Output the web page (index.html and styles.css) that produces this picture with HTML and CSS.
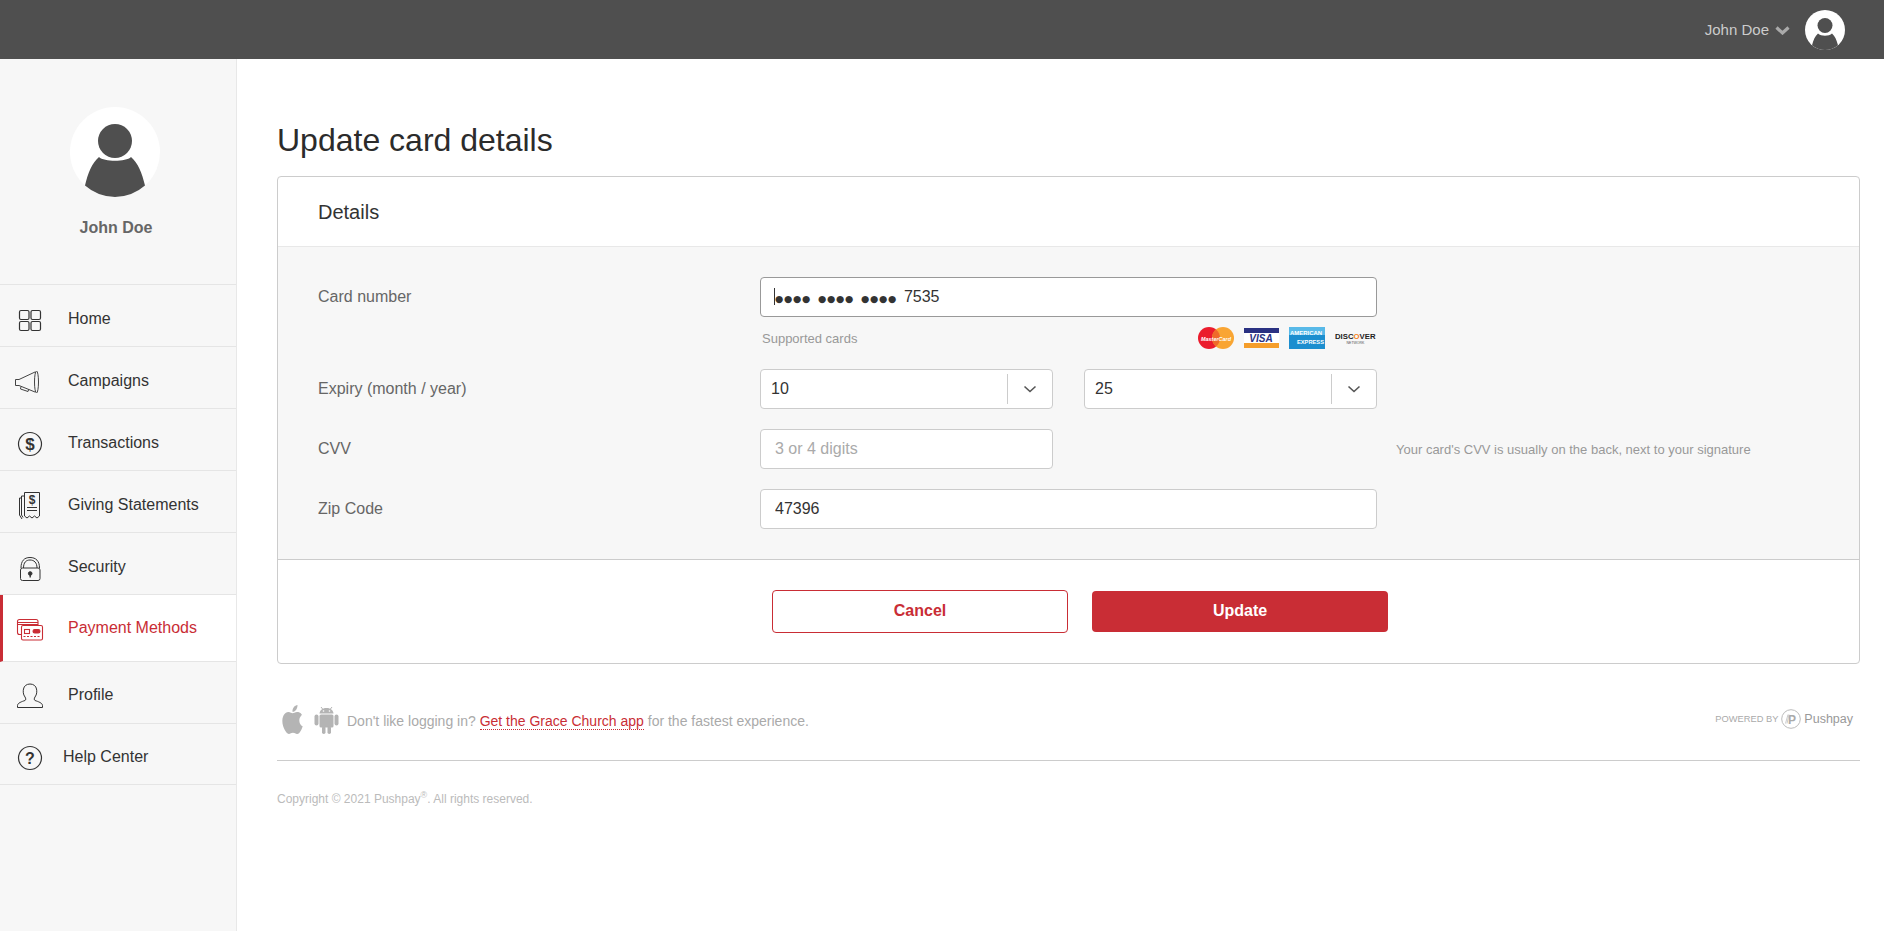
FILE: index.html
```html
<!DOCTYPE html>
<html lang="en">
<head>
<meta charset="utf-8">
<title>Update card details</title>
<link rel="stylesheet" href="styles.css">
</head>
<body>
<header class="topbar">
  <span class="topbar-name">John Doe</span>
  <svg class="topbar-chevron" width="15" height="9" viewBox="0 0 15 9"><path d="M1.500 1.500 7.500 7l6-5.500" fill="none" stroke="#aaa" stroke-width="3.200"/></svg>
  <svg class="topbar-avatar" width="40" height="40" viewBox="0 0 40 40"><circle cx="20" cy="20" r="20" fill="#fff"/><circle cx="20" cy="15.500" r="7.500" fill="#4f4f4f"/><path d="M7 35.200C8.500 30 10 26 13 23.500 16 26.500 24 26.500 27 23.500 30 26 31.500 30 33 35.200A20 20 0 0 1 7 35.200Z" fill="#4f4f4f"/></svg>
</header>
<div class="layout">
  <aside class="sidebar">
    <div class="profile">
      <svg class="profile-avatar" width="90" height="90" viewBox="0 0 90 90"><circle cx="45" cy="45" r="45" fill="#fff"/><circle cx="45" cy="34" r="17" fill="#4f4f4f"/><path d="M15 78.500C18 66 22 56 29 50 34 55 56 55 61 50 68 56 72 66 75 78.500A45 45 0 0 1 15 78.500Z" fill="#4f4f4f"/></svg>
      <div class="profile-name">John Doe</div>
    </div>
    <nav class="nav">
      <a class="nav-link"><span class="nav-icon"><svg width="44" height="32" viewBox="0 0 44 32" fill="none" stroke="#333" stroke-width="1.200"><rect x="11.500" y="7.500" width="9.500" height="9" rx="1.500"/><rect x="23" y="7.500" width="9.500" height="9" rx="1.500"/><rect x="11.500" y="18.500" width="9.500" height="9" rx="1.500"/><rect x="23" y="18.500" width="9.500" height="9" rx="1.500"/></svg></span>Home</a>
      <a class="nav-link"><span class="nav-icon"><svg width="44" height="32" viewBox="0 0 44 32" fill="none" stroke="#444"><path d="M27 7 11 14.500H7.500V20.500H11L27 27"/><ellipse cx="28.500" cy="17" rx="2" ry="11"/><path d="M13 21.500 12.500 24 20 26.500 20.800 24.200"/></svg></span>Campaigns</a>
      <a class="nav-link"><span class="nav-icon"><svg width="44" height="32" viewBox="0 0 44 32"><circle cx="22" cy="17" r="11.500" fill="none" stroke="#333" stroke-width="1.200"/><text class="icon-glyph" x="22" y="23" font-size="17">$</text></svg></span>Transactions</a>
      <a class="nav-link"><span class="nav-icon"><svg width="44" height="32" viewBox="0 0 44 32" fill="none" stroke="#333"><path d="M16.500 3.500H31.500V27L29 29 26.500 27 24 29 21.500 27 19 29 16.500 27Z"/><path d="M16 7H13.500V26L15 28.500M13.500 9H11.500V26L14 30M19 18.500H29M19 21.500H29"/><text class="icon-glyph" x="24" y="15" font-size="12" stroke="none">$</text></svg></span>Giving Statements</a>
      <a class="nav-link"><span class="nav-icon"><svg width="44" height="32" viewBox="0 0 44 32" fill="none" stroke="#333"><rect x="12.500" y="17" width="19.500" height="12.500" rx="2"/><path d="M13 17C13 10 16 6.500 22 6.500S31.500 10 31.500 17M15.500 17C15.500 11.500 18 9 22 9S29 11.500 29 17"/><circle cx="22.200" cy="22.500" r="1.800" fill="#333"/><path d="M22.200 23V26.500" stroke-width="1.400"/></svg></span>Security</a>
      <a class="nav-link nav-link-active"><span class="nav-icon"><svg width="44" height="32" viewBox="0 0 44 32" fill="none" stroke="#c92d35" stroke-width="1.100"><rect x="9.500" y="7.500" width="20.500" height="15" rx="2"/><path d="M9.500 10.500H30M9.500 12.500H30"/><rect x="13.500" y="13.500" width="21" height="14.500" rx="1.500" fill="#fff"/><rect x="16.500" y="17.500" width="5" height="4"/><rect x="25" y="17.500" width="7" height="3.500" rx="1.700" fill="#c92d35"/><path d="M15.500 24.500H33" stroke-dasharray="2 1.500"/></svg></span>Payment Methods</a>
      <a class="nav-link nav-link-profile"><span class="nav-icon"><svg width="44" height="32" viewBox="0 0 44 32" fill="none" stroke="#333"><path d="M9.500 28.500V26.500C9.500 24 14 22.500 17 21.500 18 21 18 19.500 17 18 15 15.500 15 12 15.500 10 16 7 18.500 5 22 5S28 7 28.500 10C29 12 29 15.500 27 18 26 19.500 26 21 27 21.500 30 22.500 34.500 24 34.500 26.500V28.500Z"/></svg></span>Profile</a>
      <a class="nav-link nav-link-help"><span class="nav-icon"><svg width="44" height="32" viewBox="0 0 44 32"><circle cx="22" cy="17" r="11.500" fill="none" stroke="#333" stroke-width="1.200"/><text class="icon-glyph" x="22" y="22.500" font-size="16">?</text></svg></span>Help Center</a>
    </nav>
  </aside>
  <main class="main">
    <h1 class="title">Update card details</h1>
    <section class="card">
      <h2 class="card-title">Details</h2>
      <div class="form">
        <label class="label">Card number</label>
        <div class="span-3">
          <div class="input input-focus"><span class="caret"></span><span class="dots">●●●●</span><span class="dots">●●●●</span><span class="dots">●●●●</span>7535</div>
          <div class="supported">
            <span>Supported cards</span>
            <div class="logos">
              <svg width="36" height="22" viewBox="0 0 36 22"><circle cx="11" cy="11" r="11" fill="#eb1c2d"/><circle cx="25" cy="11" r="11" fill="#f9a533"/><path d="M18 2.500A11 11 0 0 1 18 19.500 11 11 0 0 1 18 2.500" fill="#ef6a2a"/><text class="logo-mc" x="3" y="13.500" textLength="30" lengthAdjust="spacingAndGlyphs">MasterCard</text></svg>
              <svg width="35" height="20" viewBox="0 0 35 20"><rect width="35" height="20" fill="#fff"/><rect width="35" height="5" fill="#2a3182"/><rect y="15" width="35" height="5" fill="#f59e2c"/><text class="logo-visa" x="17" y="13.500">VISA</text></svg>
              <svg width="36" height="22" viewBox="0 0 36 22"><rect width="36" height="22" fill="#1c8ecf"/><rect width="36" height="8" fill="#58b9e8"/><text class="logo-amex" x="1" y="8" textLength="32" lengthAdjust="spacingAndGlyphs">AMERICAN</text><text class="logo-amex" x="8" y="17" textLength="27" lengthAdjust="spacingAndGlyphs">EXPRESS</text></svg>
              <svg width="41" height="16" viewBox="0 0 41 16"><text class="logo-disc" x="0" y="8.500" textLength="40.500" lengthAdjust="spacingAndGlyphs">DISC<tspan class="logo-disc-o">O</tspan>VER</text><text class="logo-net" x="20.500" y="13.500">NETWORK</text></svg>
            </div>
          </div>
        </div>
        <label class="label">Expiry (month / year)</label>
        <div class="select"><span class="select-value">10</span><span class="select-arrow"><svg width="14" height="8" viewBox="0 0 14 8"><path d="M1.500 1.500 7 6.500l5.500-5" fill="none" stroke="#555" stroke-width="1.600"/></svg></span></div>
        <div></div>
        <div class="select"><span class="select-value">25</span><span class="select-arrow"><svg width="14" height="8" viewBox="0 0 14 8"><path d="M1.500 1.500 7 6.500l5.500-5" fill="none" stroke="#555" stroke-width="1.600"/></svg></span></div>
        <label class="label">CVV</label>
        <input class="input" type="text" placeholder="3 or 4 digits">
        <div class="hint-cell"><span class="hint">Your card's CVV is usually on the back, next to your signature</span></div>
        <label class="label">Zip Code</label>
        <input class="input span-3" type="text" value="47396">
      </div>
      <div class="actions">
        <button class="btn btn-outline" type="button">Cancel</button>
        <button class="btn btn-solid" type="button">Update</button>
      </div>
    </section>
    <div class="app-row">
      <div class="app-promo">
        <svg class="app-icon" width="25" height="29" viewBox="0 0 24 24" preserveAspectRatio="none"><path fill="#b4b4b4" d="M12.152 6.896c-.948 0-2.415-1.078-3.96-1.04-2.04.027-3.91 1.183-4.961 3.014-2.117 3.675-.546 9.103 1.519 12.09 1.013 1.454 2.208 3.09 3.792 3.039 1.52-.065 2.09-.987 3.935-.987 1.831 0 2.35.987 3.96.948 1.637-.026 2.676-1.48 3.676-2.948 1.156-1.688 1.636-3.325 1.662-3.415-.039-.013-3.182-1.221-3.22-4.857-.026-3.04 2.48-4.494 2.597-4.559-1.429-2.09-3.623-2.324-4.39-2.376-2-.156-3.675 1.09-4.61 1.09zM15.530 3.830c.843-1.012 1.400-2.427 1.245-3.830-1.207.052-2.662.805-3.532 1.818-.78.896-1.454 2.338-1.273 3.714 1.338.104 2.715-.688 3.559-1.701"/></svg>
        <svg class="app-icon" width="25" height="29" viewBox="0 0 25 29" fill="#b4b4b4"><path d="M5.500 8.500C5.700 5.500 8 3 12.500 3S19.300 5.500 19.500 8.500Z"/><path d="M7 2 9 4.500M18 2 16 4.500" stroke="#b4b4b4"/><rect x="5.500" y="9.500" width="14" height="13" rx="1.500"/><rect x="0.500" y="9.500" width="4" height="11" rx="2"/><rect x="20.500" y="9.500" width="4" height="11" rx="2"/><rect x="8" y="21" width="3.500" height="8" rx="1.700"/><rect x="13.500" y="21" width="3.500" height="8" rx="1.700"/><circle cx="9.500" cy="6" r=".8" fill="#fff"/><circle cx="15.500" cy="6" r=".8" fill="#fff"/></svg>
        <span class="app-text">Don't like logging in? <a class="app-link">Get the Grace Church app</a> for the fastest experience.</span>
      </div>
      <div class="powered">
        <span class="powered-by">POWERED BY</span>
        <svg width="20" height="20" viewBox="0 0 20 20"><circle cx="10" cy="10" r="9.300" fill="#fff" stroke="#bbb"/><text class="powered-p" x="11" y="14.500">P</text><path d="M4.500 14.500 7 5.500M6 14.500 8 5.500" stroke="#ccc"/></svg>
        <span class="powered-name">Pushpay</span>
      </div>
    </div>
    <p class="copyright">Copyright © 2021 Pushpay<sup class="reg">®</sup>. All rights reserved.</p>
  </main>
</div>
</body>
</html>
```
FILE: styles.css
```css
* { box-sizing: border-box; }
html, body { margin: 0; height: 100%; }
body {
  font-family: "Liberation Sans", Arial, sans-serif;
  font-size: 16px;
  color: #333;
  background: #fff;
  display: flex;
  flex-direction: column;
  overflow: hidden;
}

/* top bar */
.topbar {
  height: 59px;
  flex: none;
  background: #4f4f4f;
  display: flex;
  align-items: center;
  justify-content: flex-end;
  padding-right: 39px;
}
.topbar-name { color: #ccc; font-size: 15px; }
.topbar-chevron { margin: 2px 15px 0 6px; }
.topbar-avatar { display: block; }

.layout { flex: 1; display: flex; min-height: 0; }

/* sidebar */
.sidebar {
  width: 237px;
  flex: none;
  background: #f7f7f7;
  border-right: 1px solid #e8e8e8;
}
.profile {
  height: 225px;
  padding: 48px 4px 0 0;
  display: flex;
  flex-direction: column;
  align-items: center;
}
.profile-avatar { display: block; margin-right: 2px; }
.profile-name {
  margin-top: 21px;
  font-size: 16px;
  line-height: 20px;
  font-weight: bold;
  color: #666;
}
.nav { border-top: 1px solid #e5e5e5; }
.nav-link {
  display: flex;
  align-items: center;
  height: 62px;
  padding: 6px 0 0 8px;
  border-bottom: 1px solid #e5e5e5;
  color: #333;
}
.nav-icon { width: 44px; margin-right: 16px; display: flex; }
.nav-link-active {
  height: 67px;
  padding: 0 0 0 5px;
  border-left: 3px solid #c92d35;
  background: #fff;
  color: #c92d35;
}
.nav-link-profile { padding-top: 4px; }
.nav-link-help { height: 61px; padding-top: 5px; }
.nav-link-help .nav-icon { margin-right: 11px; }
.icon-glyph {
  font-family: "Liberation Sans", Arial, sans-serif;
  font-weight: bold;
  text-anchor: middle;
  fill: #333;
}

/* main */
.main { flex: 1; min-width: 0; padding: 62px 24px 0 40px; }
.title {
  margin: 0 0 17px;
  font-size: 32px;
  line-height: 38px;
  font-weight: normal;
  color: #2b2b2b;
}
.card { border: 1px solid #ccc; border-radius: 4px; }
.card-title {
  margin: 0;
  height: 70px;
  padding-left: 40px;
  font-size: 20px;
  font-weight: normal;
  line-height: 70px;
  color: #333;
  border-bottom: 1px solid #e8e8e8;
}
.form {
  display: grid;
  grid-template-columns: 442px 293px 31px 293px 1fr;
  row-gap: 20px;
  padding: 30px 0 30px 40px;
  background: #f7f7f7;
  border-bottom: 1px solid #ccc;
}
.label { grid-column: 1; color: #666; line-height: 40px; }
.span-3 { grid-column: span 3; }
.input {
  display: block;
  width: 100%;
  height: 40px;
  padding: 0 14px;
  border: 1px solid #ccc;
  border-radius: 4px;
  background: #fff;
  font: 16px/38px "Liberation Sans", Arial, sans-serif;
  color: #333;
  outline: none;
}
.input::placeholder { color: #aaa; opacity: 1; }
.input-focus { position: relative; border-color: #999; }
.caret {
  position: absolute;
  left: 13px;
  top: 10px;
  height: 17px;
  border-left: 1px solid #333;
}
.dots {
  font-family: "DejaVu Sans", sans-serif;
  font-size: 9.500px;
  letter-spacing: .7px;
  margin-right: 7px;
}
.supported {
  display: flex;
  justify-content: space-between;
  margin-top: 10px;
  height: 22px;
  padding-left: 2px;
  font-size: 13px;
  line-height: 24px;
  color: #999;
}
.logos { display: flex; gap: 10px; align-items: flex-start; padding-right: 1px; }
.logos svg { display: block; }
.logos svg:nth-child(2) { margin-top: 1px; }
.logos svg:nth-child(4) { margin-top: 3px; }
.logo-mc { font: italic bold 5.800px "Liberation Sans", Arial, sans-serif; fill: #fff; }
.logo-visa { font: italic bold 10px "Liberation Sans", Arial, sans-serif; fill: #2a3182; text-anchor: middle; }
.logo-amex { font: bold 6px "Liberation Sans", Arial, sans-serif; fill: #fff; }
.logo-disc { font: bold 8px "Liberation Sans", Arial, sans-serif; fill: #222; }
.logo-disc-o { fill: #f58220; }
.logo-net { font: 3.500px "Liberation Sans", Arial, sans-serif; fill: #555; text-anchor: middle; }
.select {
  display: flex;
  align-items: center;
  height: 40px;
  border: 1px solid #ccc;
  border-radius: 4px;
  background: #fff;
}
.select-value { flex: 1; padding-left: 10px; color: #333; }
.select-arrow {
  width: 45px;
  height: 30px;
  border-left: 1px solid #ccc;
  display: flex;
  align-items: center;
  justify-content: center;
}
.hint-cell { grid-column: span 3; display: flex; align-items: center; padding-left: 343px; white-space: nowrap; }
.hint { font-size: 13px; color: #999; }
.actions {
  display: flex;
  align-items: center;
  gap: 24px;
  padding: 30px 0 30px 494px;
}
.btn {
  width: 296px;
  padding: 0 0 2px;
  border-radius: 4px;
  font: bold 16px "Liberation Sans", Arial, sans-serif;
}
.btn-outline { height: 43px; border: 1px solid #c92d35; background: #fff; color: #c92d35; }
.btn-solid { height: 41px; border: 0; background: #c92d35; color: #fff; }

/* footer */
.app-row {
  display: flex;
  justify-content: space-between;
  align-items: center;
  margin-top: 41px;
  height: 56px;
  padding: 0 7px 26px 3px;
  border-bottom: 1px solid #ccc;
}
.app-promo { display: flex; align-items: center; }
.app-icon { display: block; margin-right: 9px; }
.app-text { font-size: 14px; color: #aaa; margin: 2px 0 0 -1px; }
.app-link { color: #c92d35; border-bottom: 1px dotted #c92d35; }
.powered { display: flex; align-items: center; gap: 3px; margin-top: -2px; }
.powered-by { font-size: 9.300px; color: #aaa; }
.powered-p { font: bold 12px "Liberation Sans", Arial, sans-serif; fill: #aaa; text-anchor: middle; }
.powered-name { font-size: 12.500px; color: #999; }
.copyright { margin: 31px 0 0; font-size: 12px; line-height: 14px; color: #bbb; }
.reg { font-size: 9px; line-height: 0; }
```
